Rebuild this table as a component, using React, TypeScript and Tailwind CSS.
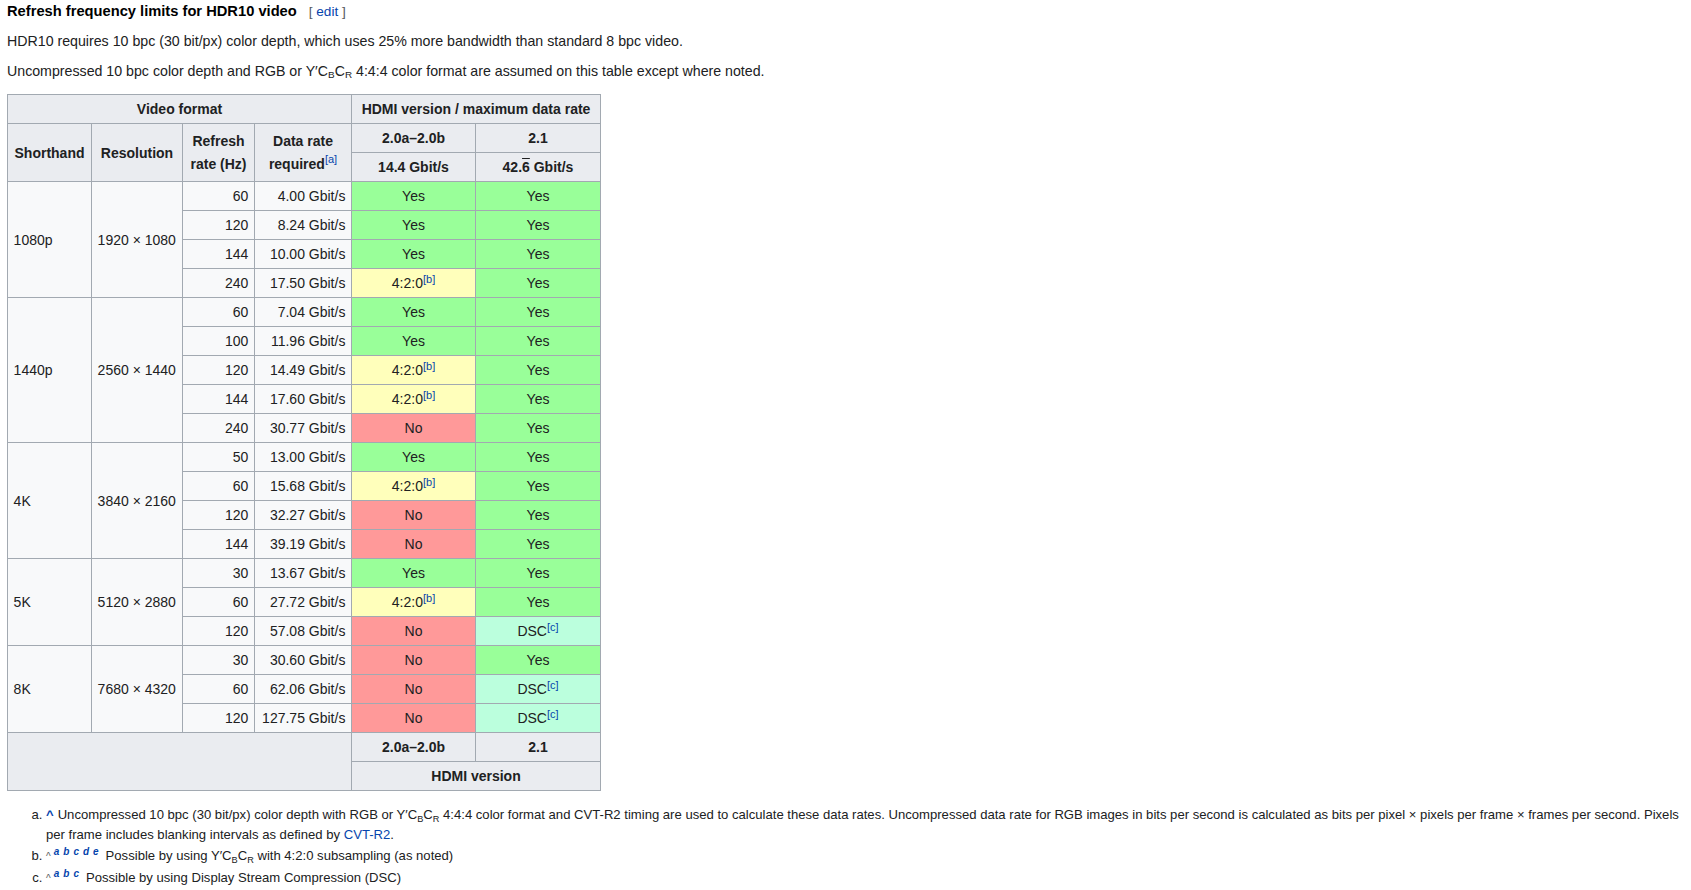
type Kind = "y" | "n" | "p" | "d";

type Row = { hz: number; rate: string; a: Kind; b: Kind };

const groups: { name: string; res: string; rows: Row[] }[] = [
  {
    name: "1080p",
    res: "1920 × 1080",
    rows: [
      { hz: 60, rate: "4.00", a: "y", b: "y" },
      { hz: 120, rate: "8.24", a: "y", b: "y" },
      { hz: 144, rate: "10.00", a: "y", b: "y" },
      { hz: 240, rate: "17.50", a: "p", b: "y" },
    ],
  },
  {
    name: "1440p",
    res: "2560 × 1440",
    rows: [
      { hz: 60, rate: "7.04", a: "y", b: "y" },
      { hz: 100, rate: "11.96", a: "y", b: "y" },
      { hz: 120, rate: "14.49", a: "p", b: "y" },
      { hz: 144, rate: "17.60", a: "p", b: "y" },
      { hz: 240, rate: "30.77", a: "n", b: "y" },
    ],
  },
  {
    name: "4K",
    res: "3840 × 2160",
    rows: [
      { hz: 50, rate: "13.00", a: "y", b: "y" },
      { hz: 60, rate: "15.68", a: "p", b: "y" },
      { hz: 120, rate: "32.27", a: "n", b: "y" },
      { hz: 144, rate: "39.19", a: "n", b: "y" },
    ],
  },
  {
    name: "5K",
    res: "5120 × 2880",
    rows: [
      { hz: 30, rate: "13.67", a: "y", b: "y" },
      { hz: 60, rate: "27.72", a: "p", b: "y" },
      { hz: 120, rate: "57.08", a: "n", b: "d" },
    ],
  },
  {
    name: "8K",
    res: "7680 × 4320",
    rows: [
      { hz: 30, rate: "30.60", a: "n", b: "y" },
      { hz: 60, rate: "62.06", a: "n", b: "d" },
      { hz: 120, rate: "127.75", a: "n", b: "d" },
    ],
  },
];

const td = "border border-[#a2a9b1] px-[5.6px] py-[2.8px] h-[29px]";
const th = "border border-[#a2a9b1] bg-[#eaecf0] px-[5.6px] py-[2.8px] h-[29px] font-bold text-center";

function Ref({ l }: { l: string }) {
  return <sup className="text-[#0645ad] text-[11px]">[{l}]</sup>;
}

function Status({ k }: { k: Kind }) {
  if (k === "y") return <td className={`${td} bg-[#99ff99] text-center`}>Yes</td>;
  if (k === "n") return <td className={`${td} bg-[#ff9999] text-center`}>No</td>;
  if (k === "p")
    return (
      <td className={`${td} bg-[#ffffbb] text-center`}>
        4:2:0
        <Ref l="b" />
      </td>
    );
  return (
    <td className={`${td} bg-[#bbffdd] text-center`}>
      DSC
      <Ref l="c" />
    </td>
  );
}

function YCbCr() {
  return (
    <>
      Y′C<sub className="text-[70%]">B</sub>C<sub className="text-[70%]">R</sub>
    </>
  );
}

function Back({ letters }: { letters: string[] }) {
  return (
    <span className="mr-[3px]">
      <span className="text-[#54595d] text-[10px] mr-[3px]">^</span>
      {letters.map((l) => (
        <sup key={l} className="text-[#0645ad] italic font-bold text-[10px] mr-[4px]">
          {l}
        </sup>
      ))}
    </span>
  );
}

export default function App() {
  return (
    <div className="min-h-screen bg-white text-[#202122] text-[14.2px] leading-[22.4px] pl-[7px] pr-[6px] font-['Liberation_Sans',Arial,sans-serif]">
      <h4 className="font-bold text-black text-[14.7px]">
        Refresh frequency limits for HDR10 video
        <span className="ml-[12px] font-normal text-[13.6px] text-[#54595d]">
          [ <span className="text-[#0645ad]">edit</span> ]
        </span>
      </h4>
      <p className="mt-[7px]">
        HDR10 requires 10 bpc (30 bit/px) color depth, which uses 25% more bandwidth than standard 8 bpc video.
      </p>
      <p className="mt-[7px]">
        Uncompressed 10 bpc color depth and RGB or <YCbCr /> 4:4:4 color format are assumed on this table except where noted.
      </p>

      <table className="mt-[12px] table-fixed border-collapse w-[594px] bg-[#f8f9fa] text-[14px]">
        <colgroup>
          <col className="w-[84px]" />
          <col className="w-[91px]" />
          <col className="w-[72px]" />
          <col className="w-[97px]" />
          <col className="w-[124px]" />
          <col className="w-[125px]" />
        </colgroup>
        <thead>
          <tr>
            <th colSpan={4} className={th}>Video format</th>
            <th colSpan={2} className={th}>HDMI version / maximum data rate</th>
          </tr>
          <tr>
            <th rowSpan={2} className={th}>Shorthand</th>
            <th rowSpan={2} className={th}>Resolution</th>
            <th rowSpan={2} className={th}>
              Refresh
              <br />
              rate (Hz)
            </th>
            <th rowSpan={2} className={th}>
              Data rate
              <br />
              required
              <sup className="text-[#0645ad] text-[11px] font-normal">[a]</sup>
            </th>
            <th className={th}>2.0a–2.0b</th>
            <th className={th}>2.1</th>
          </tr>
          <tr>
            <th className={th}>14.4 Gbit/s</th>
            <th className={th}>
              42.<span className="overline">6</span> Gbit/s
            </th>
          </tr>
        </thead>
        <tbody>
          {groups.map((g) =>
            g.rows.map((r, i) => (
              <tr key={g.name + r.hz}>
                {i === 0 && (
                  <>
                    <td rowSpan={g.rows.length} className={`${td} text-left`}>
                      {g.name}
                    </td>
                    <td rowSpan={g.rows.length} className={`${td} text-left`}>
                      {g.res}
                    </td>
                  </>
                )}
                <td className={`${td} text-right`}>{r.hz}</td>
                <td className={`${td} text-right`}>{r.rate} Gbit/s</td>
                <Status k={r.a} />
                <Status k={r.b} />
              </tr>
            ))
          )}
        </tbody>
        <tfoot>
          <tr>
            <th colSpan={4} rowSpan={2} className={th}></th>
            <th className={th}>2.0a–2.0b</th>
            <th className={th}>2.1</th>
          </tr>
          <tr>
            <th colSpan={2} className={th}>HDMI version</th>
          </tr>
        </tfoot>
      </table>

      <ol className="mt-[14px] list-[lower-alpha] pl-[39px] text-[13.1px] leading-[20px]">
        <li className="mb-[1px]">
          <span className="text-[#0645ad] font-bold mr-[4px]">^</span>
          Uncompressed 10 bpc (30 bit/px) color depth with RGB or <YCbCr /> 4:4:4 color format and CVT-R2 timing are used to calculate these data rates. Uncompressed data rate for RGB images in bits per second is calculated as bits per pixel × pixels per frame × frames per second. Pixels per frame includes blanking intervals as defined by{" "}
          <span className="text-[#0645ad]">CVT-R2</span>.
        </li>
        <li className="mb-[1px]">
          <Back letters={["a", "b", "c", "d", "e"]} />
          Possible by using <YCbCr /> with 4:2:0 subsampling (as noted)
        </li>
        <li className="mb-[1px]">
          <Back letters={["a", "b", "c"]} />
          Possible by using Display Stream Compression (DSC)
        </li>
      </ol>
    </div>
  );
}
